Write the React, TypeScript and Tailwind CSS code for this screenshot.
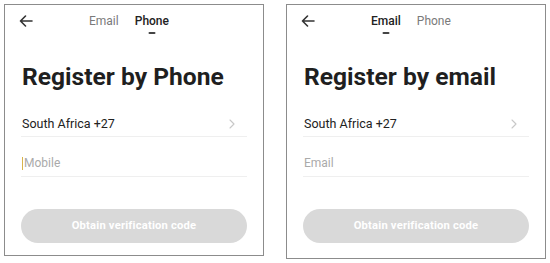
function BackArrow() {
  return (
    <svg width="14" height="12" viewBox="0 0 14 12" fill="none">
      <path d="M13 6H1.5M6.5 1L1.5 6l5 5" stroke="#333" strokeWidth="1.6" strokeLinecap="round" strokeLinejoin="round" />
    </svg>
  );
}

function Chevron() {
  return (
    <svg width="6" height="10" viewBox="0 0 6 10" fill="none">
      <path d="M1 1l4 4-4 4" stroke="#c8c8c8" strokeWidth="1.1" strokeLinecap="round" strokeLinejoin="round" />
    </svg>
  );
}

function Panel({ mode, title, placeholder, heightClass }: { mode: "email" | "phone"; title: string; placeholder: string; heightClass: string }) {
  const tabs = [
    { key: "email", label: "Email" },
    { key: "phone", label: "Phone" },
  ];
  return (
    <div className={`w-[260px] ${heightClass} border border-[#8c8c8c] bg-white px-[16px] font-['Roboto',sans-serif]`}>
      {/* Header */}
      <div className="flex items-center h-[32px]">
        <div className="w-[14px] flex items-center justify-center ml-[-2px]">
          <BackArrow />
        </div>
        <div className="flex items-center gap-[16px] ml-[56px]">
          {tabs.map((t) => (
            <div key={t.key} className="relative flex">
              <span
                className={
                  t.key === mode
                    ? "text-[12px] leading-[14px] font-medium text-[#222]"
                    : "text-[12px] leading-[14px] text-[#7a7a7a]"
                }
              >
                {t.label}
              </span>
              {t.key === mode && (
                <div className="absolute left-1/2 -translate-x-1/2 top-[18px] w-[7px] h-[2px] rounded-full bg-[#444]" />
              )}
            </div>
          ))}
        </div>
      </div>

      {/* Title */}
      <h1 className="mt-[26px] ml-[1px] text-[24.6px] leading-[28px] font-bold text-[#1f1f1f]">
        {title}
      </h1>

      {/* Country row */}
      <div className="mt-[25px] flex items-center justify-between pb-[4px] border-b border-[#efefef] pl-[1px] pr-[12px]">
        <span className="text-[12.5px] leading-[16px] text-[#222]">South Africa +27</span>
        <Chevron />
      </div>

      {/* Input row */}
      <div className="pt-[18px] pb-[5px] border-b border-[#efefef] flex items-center pl-[1px]">
        {mode === "phone" && <div className="w-px h-[13px] bg-[#d9b44a] mr-[1px]" />}
        <span className="text-[12px] leading-[16px] text-[#aaaaaa]">{placeholder}</span>
      </div>

      {/* Button */}
      <div className="mt-[32px] h-[34px] rounded-full bg-[#d9d9d9] flex items-center justify-center">
        <span className="text-[11.2px] font-bold text-white tracking-[0.2px]">Obtain verification code</span>
      </div>
    </div>
  );
}

export default function App() {
  return (
    <div className="w-[550px] h-[263px] bg-white flex items-start gap-[22px] pl-[4px] pt-[4px]">
      <Panel mode="phone" title="Register by Phone" placeholder="Mobile" heightClass="h-[252px]" />
      <Panel mode="email" title="Register by email" placeholder="Email" heightClass="h-[255px]" />
    </div>
  );
}
